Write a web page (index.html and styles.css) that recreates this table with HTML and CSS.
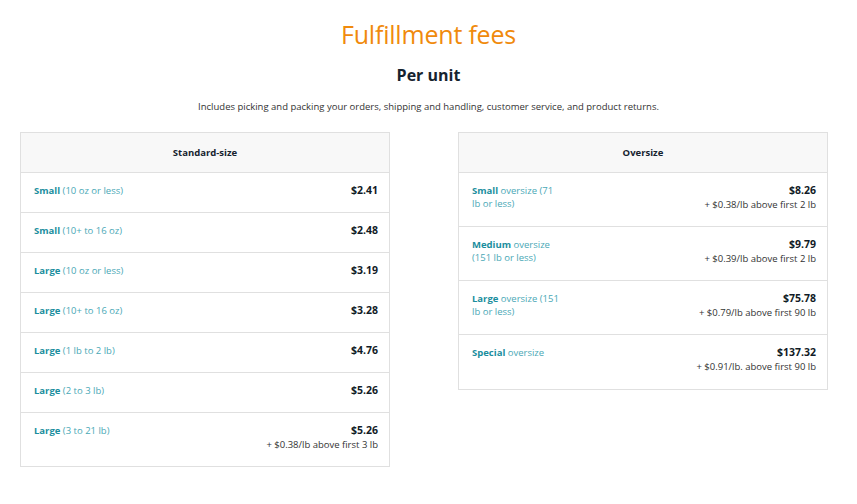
FILE: index.html
```html
<!DOCTYPE html>
<html>
<head>
<meta charset="utf-8">
<link rel="stylesheet" href="styles.css">
</head>
<body>
<div class="page">
  <h1 class="title">Fulfillment fees</h1>
  <h2 class="subtitle">Per unit</h2>
  <p class="desc">Includes picking and packing your orders, shipping and handling, customer service, and product returns.</p>
  <div class="tables">
    <div class="table std">
      <div class="head">Standard-size</div>
      <div class="row"><div class="label"><b>Small</b> (10 oz or less)</div><div class="price"><b>$2.41</b></div></div>
      <div class="row"><div class="label"><b>Small</b> (10+ to 16 oz)</div><div class="price"><b>$2.48</b></div></div>
      <div class="row"><div class="label"><b>Large</b> (10 oz or less)</div><div class="price"><b>$3.19</b></div></div>
      <div class="row"><div class="label"><b>Large</b> (10+ to 16 oz)</div><div class="price"><b>$3.28</b></div></div>
      <div class="row"><div class="label"><b>Large</b> (1 lb to 2 lb)</div><div class="price"><b>$4.76</b></div></div>
      <div class="row"><div class="label"><b>Large</b> (2 to 3 lb)</div><div class="price"><b>$5.26</b></div></div>
      <div class="row tall"><div class="label"><b>Large</b> (3 to 21 lb)</div><div class="price"><b>$5.26</b><span>+ $0.38/lb above first 3 lb</span></div></div>
    </div>
    <div class="table over">
      <div class="head">Oversize</div>
      <div class="row"><div class="label"><b>Small</b> oversize (71<br>lb or less)</div><div class="price"><b>$8.26</b><span>+ $0.38/lb above first 2 lb</span></div></div>
      <div class="row"><div class="label"><b>Medium</b> oversize<br>(151 lb or less)</div><div class="price"><b>$9.79</b><span>+ $0.39/lb above first 2 lb</span></div></div>
      <div class="row"><div class="label"><b>Large</b> oversize (151<br>lb or less)</div><div class="price"><b>$75.78</b><span>+ $0.79/lb above first 90 lb</span></div></div>
      <div class="row"><div class="label"><b>Special</b> oversize</div><div class="price"><b>$137.32</b><span>+ $0.91/lb. above first 90 lb</span></div></div>
    </div>
  </div>
</div>
</body>
</html>
```

FILE: styles.css
```css
* { box-sizing: border-box; }
body {
  margin: 0;
  background: #fff;
  font-family: "Open Sans", "Noto Sans", sans-serif;
  color: #232f3e;
}
.page {
  padding: 17px 20px 0 20px;
}
.title {
  margin: 0;
  text-align: center;
  font-weight: 400;
  font-size: 25px;
  line-height: 34px;
  color: #f08a0c;
  letter-spacing: -0.2px;
}
.subtitle {
  margin: 14px 0 0 0;
  text-align: center;
  font-size: 16px;
  line-height: 20px;
  font-weight: 700;
  color: #16232f;
}
.desc {
  margin: 15px 0 0 0;
  text-align: center;
  font-size: 9.5px;
  line-height: 14px;
  color: #333;
}
.tables {
  display: flex;
  gap: 68px;
  margin-top: 18px;
  align-items: flex-start;
}
.table {
  width: 370px;
  border: 1px solid #e0e0e0;
}
.head {
  height: 40px;
  background: #f8f8f8;
  border-bottom: 1px solid #e0e0e0;
  display: flex;
  align-items: center;
  justify-content: center;
  font-size: 9.5px;
  font-weight: 700;
  color: #16232f;
}
.row {
  display: flex;
  justify-content: space-between;
  align-items: flex-start;
  padding: 11px 11px 0 13px;
  height: 40px;
  border-bottom: 1px solid #e0e0e0;
}
.row:last-child { border-bottom: none; }
.std .row.tall { height: 53px; }
.over .row { height: 54px; }
.label {
  font-size: 9.5px;
  line-height: 13px;
  color: #4aa8b6;
}
.label b {
  color: #1b8e9e;
  font-weight: 700;
}
.price {
  text-align: right;
  font-size: 10.5px;
  line-height: 13px;
  color: #111b26;
}
.price b {
  display: block;
  font-weight: 700;
}
.price span {
  display: block;
  margin-top: 1px;
  font-size: 9.5px;
  line-height: 13px;
  color: #333;
}
```
